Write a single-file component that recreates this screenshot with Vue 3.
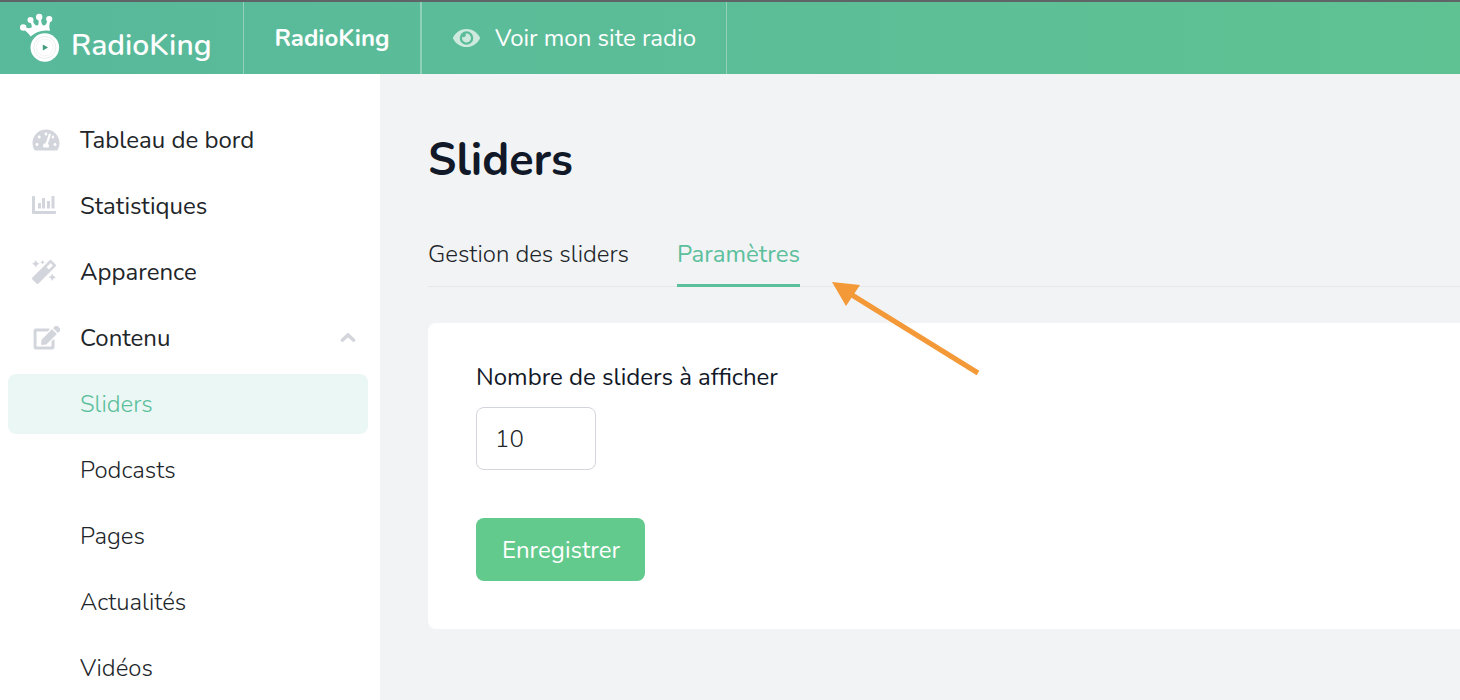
<script setup>
import { ref } from 'vue'

const count = ref('10')

const mainItems = [
  {
    label: 'Tableau de bord',
    box: '0 0 576 512',
    path: 'M288 32C128.94 32 0 160.94 0 320c0 52.8 14.25 102.26 39.06 144.8 5.61 9.62 16.3 15.2 27.44 15.2h443c11.14 0 21.83-5.58 27.44-15.2C561.75 422.26 576 372.8 576 320c0-159.06-128.94-288-288-288zm0 64c14.71 0 26.58 10.13 30.32 23.65-1.11 2.26-2.64 4.23-3.45 6.67l-9.22 27.67c-5.13 3.49-10.97 6.01-17.64 6.01-17.67 0-32-14.33-32-32S270.33 96 288 96zM96 384c-17.67 0-32-14.33-32-32s14.33-32 32-32 32 14.33 32 32-14.33 32-32 32zm48-160c-17.67 0-32-14.33-32-32s14.33-32 32-32 32 14.33 32 32-14.33 32-32 32zm246.77-72.41l-61.33 184C343.13 347.33 352 364.54 352 384c0 11.72-3.38 22.55-8.88 32H232.88c-5.5-9.45-8.88-20.28-8.88-32 0-33.94 26.5-61.43 59.9-63.59l61.34-184.01c4.17-12.56 17.73-19.45 30.36-15.17 12.57 4.19 19.35 17.79 15.17 30.36zm14.66 57.2l15.52-46.55c3.47-1.29 7.13-2.23 11.05-2.23 17.67 0 32 14.33 32 32s-14.33 32-32 32c-11.38-.01-20.89-6.28-26.57-15.22zM480 384c-17.67 0-32-14.33-32-32s14.33-32 32-32 32 14.33 32 32-14.33 32-32 32z'
  },
  {
    label: 'Statistiques',
    box: '0 0 28 24',
    path: 'M.8 2h1.4q.8 0 .8.8V17h20.200q.8 0 .8.8v1.400q0 .8-.8.8H1q-1 0-1-1V2.800Q0 2 .8 2zM6.600 9h1.800q.6 0 .6.6v4.800h-3V9.600q0-.6.6-.6zM10.600 4h1.800q.6 0 .6.6v9.800h-3V4.600q0-.6.6-.6zM15.600 7h1.800q.6 0 .6.6v6.800h-3V7.600q0-.6.6-.6zM20.100 2h1.800q.6 0 .6.6v11.800h-3V2.600q0-.6.6-.6z'
  },
  {
    label: 'Apparence',
    box: '0 0 597 512',
    path: 'M224 96l16-32 32-16-32-16-16-32-16 32-32 16 32 16 16 32zM80 160l26.66-53.33L160 80l-53.34-26.67L80 0 53.34 53.33 0 80l53.34 26.67L80 160zm352 128l-26.66 53.33L352 368l53.34 26.67L432 448l26.66-53.33L512 368l-53.34-26.67L432 288zm70.62-193.77L417.77 9.38C411.53 3.12 403.34 0 395.15 0c-8.19 0-16.38 3.12-22.63 9.38L9.38 372.52c-12.5 12.5-12.5 32.76 0 45.25l84.85 84.85c6.25 6.25 14.44 9.37 22.62 9.37 8.19 0 16.38-3.12 22.63-9.37l363.14-363.15c12.5-12.48 12.5-32.75 0-45.24zM359.45 203.46l-50.91-50.91 86.6-86.6 50.91 50.91-86.6 86.6z'
  },
  {
    label: 'Contenu',
    open: true,
    box: '-34 10 600 512',
    path: 'M402.6 83.2l90.2 90.2c3.8 3.8 3.8 10 0 13.8L274.4 405.6l-92.8 10.3c-12.4 1.4-22.900-9.1-21.5-21.5l10.300-92.8L388.8 83.2c3.8-3.8 10-3.8 13.8 0zm162-22.900l-48.8-48.8c-15.2-15.2-39.9-15.2-55.2 0l-35.4 35.4c-3.8 3.8-3.8 10 0 13.8l90.2 90.2c3.8 3.8 10 3.8 13.8 0l35.4-35.4c15.2-15.3 15.2-40 0-55.2zM384 346.2V448H64V128h229.8c3.2 0 6.2-1.3 8.5-3.5l40-40c7.6-7.6 2.2-20.5-8.5-20.5H48C21.5 64 0 85.5 0 112v352c0 26.5 21.5 48 48 48h352c26.5 0 48-21.5 48-48V306.2c0-10.7-12.9-16-20.5-8.5l-40 40c-2.2 2.3-3.5 5.3-3.5 8.5z'
  }
]

const subItems = ['Sliders', 'Podcasts', 'Pages', 'Actualités', 'Vidéos']
</script>

<template>
  <div class="app">
    <header class="topbar">
      <a class="brand" href="#">
        <svg class="brand-mark" viewBox="0 0 40 50" aria-hidden="true">
          <g fill="#fff">
            <path d="M10.500 23.500Q8 19 2.500 16L4 13Q8 16.500 11.500 14.500 12.500 12 9.500 8L12.500 7Q14 12.500 17.500 12.500 19.500 11 18 5L21 5Q21 11.500 23.500 12.500 26.500 12.500 27.500 7L30.500 7.500Q28.500 13 30 17.800 19 16 10.500 23.500z" />
            <circle cx="3.200" cy="14.500" r="3.200" />
            <circle cx="10.500" cy="7" r="3" />
            <circle cx="19.200" cy="4" r="3.200" />
            <circle cx="29.200" cy="6" r="3.100" />
            <circle cx="24.800" cy="34.500" r="14.300" />
          </g>
          <circle cx="24.800" cy="34.500" r="11" fill="none" stroke="#ececec" />
          <circle cx="24.800" cy="34.500" r="8.500" fill="none" stroke="#f3f3f3" />
          <path d="M22.800 31.500v6l5.200-3z" fill="#3f9c7c" />
        </svg>
        <span class="brand-name">RadioKing</span>
      </a>
      <a class="radio" href="#">RadioKing</a>
      <a class="visit" href="#">
        <svg class="eye" viewBox="0 64 576 384" aria-hidden="true">
          <path fill="currentColor" d="M572.52 241.4C518.29 135.59 410.93 64 288 64S57.68 135.64 3.48 241.41a32.35 32.35 0 0 0 0 29.19C57.71 376.41 165.07 448 288 448s230.32-71.64 284.52-177.41a32.35 32.35 0 0 0 0-29.19zM288 400a144 144 0 1 1 144-144 143.93 143.93 0 0 1-144 144zm0-240a95.31 95.31 0 0 0-25.31 3.79 47.85 47.85 0 0 1-66.9 66.9A95.78 95.78 0 1 0 288 160z" />
        </svg>
        <span>Voir mon site radio</span>
      </a>
    </header>

    <div class="body">
      <nav class="sidebar">
        <ul class="list">
          <li v-for="item in mainItems" :key="item.label">
            <a class="item" href="#">
              <svg class="icon" :viewBox="item.box" aria-hidden="true">
                <path fill="currentColor" :d="item.path" />
              </svg>
              <span class="label">{{ item.label }}</span>
              <svg v-if="item.open" class="chevron" viewBox="0 0 16 10" aria-hidden="true">
                <path d="M2.500 7 8 2 13.500 7" fill="none" stroke="currentColor" stroke-width="3.600" stroke-linecap="round" />
              </svg>
            </a>
            <ul v-if="item.open" class="list sub-list">
              <li v-for="(sub, i) in subItems" :key="sub">
                <a class="item sub" :class="{ active: i === 0 }" href="#">{{ sub }}</a>
              </li>
            </ul>
          </li>
        </ul>
      </nav>

      <main class="content">
        <h1>Sliders</h1>
        <div class="tabs">
          <a class="tab" href="#">Gestion des sliders</a>
          <a class="tab current" href="#">Paramètres</a>
          <svg class="arrow" viewBox="0 0 148 96" aria-hidden="true">
            <path d="M146 91 20 13" stroke="#f39937" stroke-width="5" />
            <path d="M0 0 28 3 14 24z" fill="#f39937" />
          </svg>
        </div>
        <form class="card" @submit.prevent>
          <label for="count">Nombre de sliders à afficher</label>
          <input id="count" v-model="count" type="text" inputmode="numeric" />
          <button type="submit">Enregistrer</button>
        </form>
      </main>
    </div>
  </div>
</template>

<style>
body {
  overflow: hidden;
}
</style>

<style scoped>
.app {
  height: 100vh;
  display: flex;
  flex-direction: column;
  overflow: hidden;
  background: #f2f3f5;
  color: #212529;
  font-family: Nunito, Lato, "Noto Sans", sans-serif;
  font-size: 24px;
  font-weight: 300;
  line-height: 32px;
}
* {
  box-sizing: border-box;
}
a {
  color: inherit;
  text-decoration: none;
}
.topbar {
  display: flex;
  flex: none;
  height: 74px;
  border-top: 2px solid #5f6466;
  background: linear-gradient(90deg, #58b99b, #5fc293);
  color: #fff;
}
.topbar > a {
  display: flex;
  align-items: center;
}
.brand {
  width: 244px;
  padding-left: 20px;
  gap: 11px;
  border-right: 1px solid #92d2bd;
}
.brand-mark {
  width: 40px;
  height: 50px;
}
.brand-name {
  padding-top: 16px;
  font-size: 30px;
  font-weight: 600;
}
.radio {
  width: 178px;
  justify-content: center;
  border-right: 2px solid #8ed0ba;
  font-weight: 700;
}
.visit {
  width: 305px;
  padding-left: 31px;
  gap: 15px;
  border-right: 1px solid #92d2b9;
  font-weight: 400;
}
.eye {
  width: 27px;
  height: 18px;
  color: #ceeae0;
}
.body {
  display: flex;
  flex: 1;
  min-height: 0;
}
.sidebar {
  flex: none;
  width: 380px;
  padding: 36px 12px 0 8px;
  background: #fff;
  overflow: hidden;
}
.list {
  display: flex;
  flex-direction: column;
  gap: 6px;
  margin: 0;
  padding: 0;
  list-style: none;
}
.sub-list {
  margin-top: 6px;
}
.item {
  display: flex;
  align-items: center;
  height: 60px;
  padding: 0 12px 0 24px;
  border-radius: 8px;
}
.icon {
  width: 28px;
  height: 24px;
  margin-right: 20px;
  color: #d2d5db;
}
.label {
  flex: 1;
  font-weight: 400;
}
.chevron {
  width: 16px;
  height: 10px;
  color: #d2d5db;
}
.sub {
  padding-left: 72px;
}
.sub.active {
  background: #ebf7f4;
  color: #5bbf9c;
}
.content {
  flex: 1;
  min-width: 0;
  padding: 56px 0 0 48px;
}
h1 {
  margin: 0;
  color: #111827;
  font-size: 45px;
  line-height: 62px;
  font-weight: 700;
}
.tabs {
  position: relative;
  display: flex;
  gap: 48px;
  height: 61px;
  margin-top: 34px;
  border-bottom: 1px solid #e5e7ea;
}
.tab {
  height: 61px;
  padding-top: 12px;
}
.current {
  border-bottom: 3px solid #5bbf9c;
  color: #5bbf9c;
  font-weight: 400;
}
.arrow {
  position: absolute;
  left: 404px;
  top: 56px;
  width: 148px;
  height: 96px;
}
.card {
  display: flex;
  flex-direction: column;
  align-items: flex-start;
  margin-top: 36px;
  padding: 38px 48px 48px;
  border-radius: 8px 0 0 8px;
  background: #fff;
}
label {
  color: #111827;
  font-weight: 400;
}
input {
  width: 120px;
  height: 63px;
  margin-top: 14px;
  padding: 0 18px;
  border: 1px solid #d2d5db;
  border-radius: 8px;
  background: #fff;
  color: #212529;
  font: inherit;
}
button {
  height: 63px;
  margin-top: 48px;
  padding: 0 25px 0 26px;
  border: 0;
  border-radius: 8px;
  background: #62ca8c;
  color: #fff;
  font: inherit;
  font-weight: 400;
}
</style>
